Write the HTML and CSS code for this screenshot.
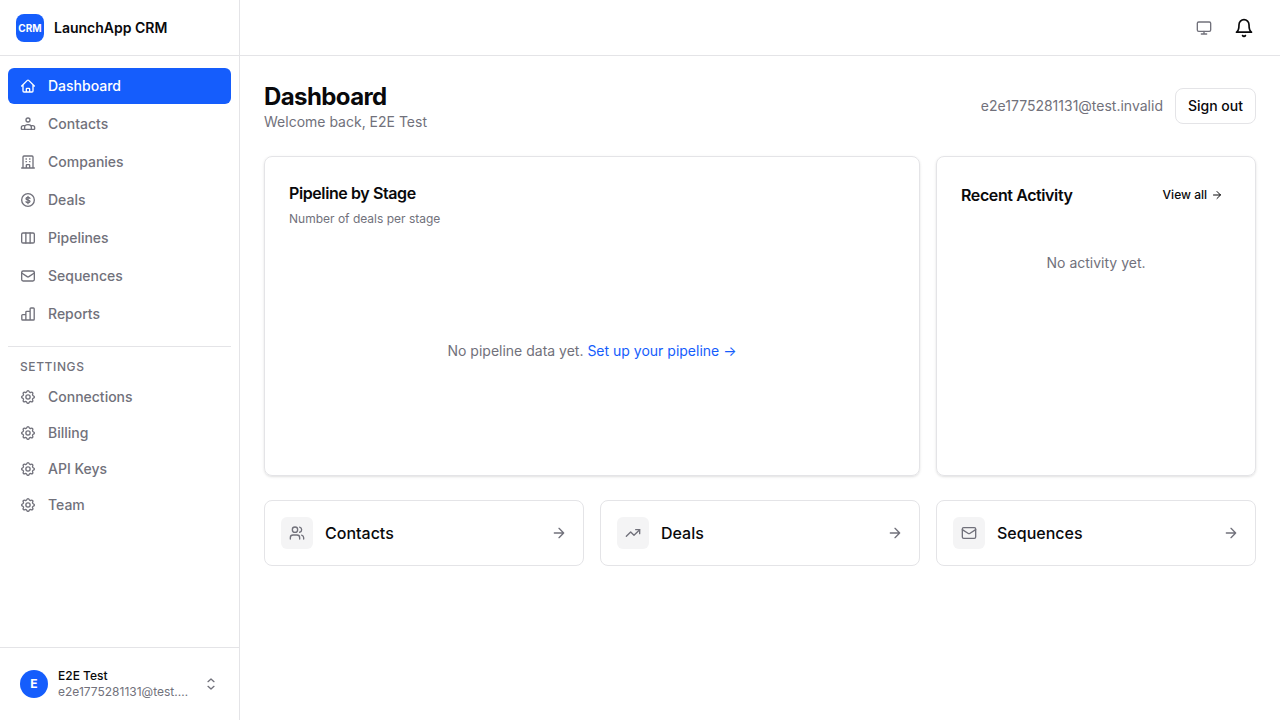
FILE: index.html
```html
<!DOCTYPE html>
<html lang="en">
<head>
    <meta charset="UTF-8">
    <meta name="viewport" content="width=device-width, initial-scale=1.0">
    <title>LaunchApp CRM</title>
    <link rel="stylesheet" href="styles.css">
</head>
<body>
    <svg class="sprite" aria-hidden="true">
        <symbol id="icon-gear" viewBox="0 0 24 24">
            <path d="M10.2 3.9c.5-2 3.1-2 3.6 0a1.9 1.9 0 0 0 2.7 1.1c1.7-1.1 3.6.8 2.5 2.5a1.9 1.9 0 0 0 1.1 2.7c2 .5 2 3.1 0 3.6a1.9 1.9 0 0 0-1.1 2.7c1.1 1.7-.8 3.6-2.5 2.5a1.9 1.9 0 0 0-2.7 1.1c-.5 2-3.1 2-3.6 0a1.9 1.9 0 0 0-2.7-1.1c-1.7 1.1-3.6-.8-2.5-2.5a1.9 1.9 0 0 0-1.1-2.7c-2-.5-2-3.1 0-3.6A1.9 1.9 0 0 0 5 7.5C3.9 5.8 5.8 3.9 7.5 5a1.9 1.9 0 0 0 2.7-1.1Z"/>
            <circle cx="12" cy="12" r="3.2"/>
        </symbol>
        <symbol id="icon-arrow" viewBox="0 0 24 24">
            <path d="M5 12h14M12 5l7 7-7 7"/>
        </symbol>
    </svg>

    <aside class="sidebar">
        <div class="brand">
            <span class="brand-logo">CRM</span>
            <span class="brand-name">LaunchApp CRM</span>
        </div>

        <nav class="nav">
            <div class="nav-group">
                <a class="nav-link active" href="#dashboard">
                    <svg class="icon" viewBox="0 0 24 24"><path d="m2.5 12 8.5-8.4a1.4 1.4 0 0 1 2 0L21.5 12M4.5 10v9.5A1.5 1.5 0 0 0 6 21h12a1.5 1.5 0 0 0 1.5-1.5V10M9.5 21v-4.5a1 1 0 0 1 1-1h3a1 1 0 0 1 1 1V21"/></svg>
                    Dashboard
                </a>
                <a class="nav-link" href="#contacts">
                    <svg class="icon" viewBox="0 0 24 24"><circle cx="12" cy="6" r="3"/><path d="M7 20v-3.5c0-2.2 2-3.5 5-3.5s5 1.3 5 3.5V20M6.5 14.5H5a3 3 0 0 0-3 3V19a1 1 0 0 0 1 1h18a1 1 0 0 0 1-1v-1.5a3 3 0 0 0-3-3h-1.5"/></svg>
                    Contacts
                </a>
                <a class="nav-link" href="#companies">
                    <svg class="icon" viewBox="0 0 24 24"><path d="M2.5 21h19M4.5 21V4.5A1.5 1.5 0 0 1 6 3h12a1.5 1.5 0 0 1 1.5 1.5V21M9 7.5h.6M14.4 7.5h.6M9 11.5h.6M14.4 11.5h.6M9.5 21v-4a1 1 0 0 1 1-1h3a1 1 0 0 1 1 1v4"/></svg>
                    Companies
                </a>
                <a class="nav-link" href="#deals">
                    <svg class="icon" viewBox="0 0 24 24"><circle cx="12" cy="12" r="9.5"/><path d="M12 6.5v11M15 9.5c-.6-.8-1.7-1.2-3-1.2-1.7 0-3 .7-3 1.9 0 2.6 6 1.1 6 3.7 0 1.2-1.3 1.9-3 1.9-1.3 0-2.4-.4-3-1.2"/></svg>
                    Deals
                </a>
                <a class="nav-link" href="#pipelines">
                    <svg class="icon" viewBox="0 0 24 24"><rect x="2.5" y="4.5" width="19" height="15" rx="2"/><path d="M8.8 4.5v15M15.2 4.5v15"/></svg>
                    Pipelines
                </a>
                <a class="nav-link" href="#sequences">
                    <svg class="icon" viewBox="0 0 24 24"><rect x="2.5" y="4.5" width="19" height="15" rx="2.2"/><path d="M2.5 7.5 10.7 13a2.3 2.3 0 0 0 2.6 0l8.2-5.5"/></svg>
                    Sequences
                </a>
                <a class="nav-link" href="#reports">
                    <svg class="icon" viewBox="0 0 24 24"><path d="M8.8 21H4a1.3 1.3 0 0 1-1.3-1.3v-5.4A1.3 1.3 0 0 1 4 13h4.8M15.2 21H8.8V9.3A1.3 1.3 0 0 1 10.1 8h5.1M15.2 21V4.3A1.3 1.3 0 0 1 16.5 3H20a1.3 1.3 0 0 1 1.3 1.3v15.4A1.3 1.3 0 0 1 20 21Z"/></svg>
                    Reports
                </a>
            </div>

            <div class="nav-settings">
                <h2 class="nav-title">SETTINGS</h2>
                <a class="nav-link" href="#connections"><svg class="icon"><use href="#icon-gear"/></svg>Connections</a>
                <a class="nav-link" href="#billing"><svg class="icon"><use href="#icon-gear"/></svg>Billing</a>
                <a class="nav-link" href="#api-keys"><svg class="icon"><use href="#icon-gear"/></svg>API Keys</a>
                <a class="nav-link" href="#team"><svg class="icon"><use href="#icon-gear"/></svg>Team</a>
            </div>
        </nav>

        <div class="sidebar-footer">
            <button class="user-menu" type="button">
                <span class="avatar">E</span>
                <span class="user-info">
                    <span class="user-name">E2E Test</span>
                    <span class="user-email">e2e1775281131@test.invalid</span>
                </span>
                <svg class="icon" viewBox="0 0 24 24"><path d="m7.5 15.5 4.5 4 4.5-4M7.5 8.500l4.500-4 4.500 4"/></svg>
            </button>
        </div>
    </aside>

    <div class="page">
        <header class="topbar">
            <button class="icon-button muted" type="button" aria-label="Theme">
                <svg class="icon" viewBox="0 0 24 24"><rect x="2" y="3" width="20" height="14" rx="2"/><path d="M8 21h8M12 17v4"/></svg>
            </button>
            <button class="icon-button" type="button" aria-label="Notifications">
                <svg class="icon icon-lg" viewBox="0 0 24 24"><path d="M6 8a6 6 0 0 1 12 0c0 7 3 9 3 9H3s3-2 3-9"/><path d="M10.3 21a1.94 1.94 0 0 0 3.4 0"/></svg>
            </button>
        </header>

        <main class="content">
            <div class="page-header">
                <div>
                    <h1>Dashboard</h1>
                    <p class="welcome">Welcome back, E2E Test</p>
                </div>
                <div class="account">
                    <span>e2e1775281131@test.invalid</span>
                    <button class="sign-out" type="button">Sign out</button>
                </div>
            </div>

            <div class="grid">
                <section class="card card-wide">
                    <h2 class="card-title">Pipeline by Stage</h2>
                    <p class="card-description">Number of deals per stage</p>
                    <div class="empty-chart">
                        <p>No pipeline data yet. <a href="#pipelines">Set up your pipeline →</a></p>
                    </div>
                </section>

                <section class="card">
                    <div class="card-header">
                        <h2 class="card-title">Recent Activity</h2>
                        <a class="view-all" href="#activity">View all <svg class="icon icon-sm"><use href="#icon-arrow"/></svg></a>
                    </div>
                    <p class="empty-activity">No activity yet.</p>
                </section>
            </div>

            <div class="grid">
                <a class="shortcut" href="#contacts">
                    <span class="shortcut-icon">
                        <svg class="icon" viewBox="0 0 24 24"><path d="M16 21v-2a4 4 0 0 0-4-4H6a4 4 0 0 0-4 4v2"/><circle cx="9" cy="7" r="4"/><path d="M22 21v-2a4 4 0 0 0-3-3.87M16 3.13a4 4 0 0 1 0 7.75"/></svg>
                    </span>
                    <span class="shortcut-label">Contacts</span>
                    <svg class="icon"><use href="#icon-arrow"/></svg>
                </a>
                <a class="shortcut" href="#deals">
                    <span class="shortcut-icon">
                        <svg class="icon" viewBox="0 0 24 24"><path d="m22 7-8.5 8.5-5-5L2 17"/><path d="M16 7h6v6"/></svg>
                    </span>
                    <span class="shortcut-label">Deals</span>
                    <svg class="icon"><use href="#icon-arrow"/></svg>
                </a>
                <a class="shortcut" href="#sequences">
                    <span class="shortcut-icon">
                        <svg class="icon" viewBox="0 0 24 24"><rect x="2" y="4" width="20" height="16" rx="2"/><path d="m22 7-8.97 5.7a1.94 1.94 0 0 1-2.06 0L2 7"/></svg>
                    </span>
                    <span class="shortcut-label">Sequences</span>
                    <svg class="icon"><use href="#icon-arrow"/></svg>
                </a>
            </div>
        </main>
    </div>
</body>
</html>
```
FILE: styles.css
```css
:root {
    --primary: #155dfc;
    --text: #09090b;
    --muted: #71717b;
    --border: #e4e4e7;
}

* {
    box-sizing: border-box;
}

body {
    display: flex;
    min-height: 100vh;
    margin: 0;
    font-family: Inter, sans-serif;
    font-size: 14px;
    line-height: 20px;
    color: var(--text);
    background-color: white;
}

h1, h2, p {
    margin: 0;
}

a {
    color: inherit;
    text-decoration: none;
}

button {
    font: inherit;
    color: inherit;
    background: none;
    border: none;
    cursor: pointer;
}

.sprite {
    display: none;
}

.icon {
    flex-shrink: 0;
    width: 16px;
    height: 16px;
    fill: none;
    stroke: currentColor;
    stroke-width: 2;
    stroke-linecap: round;
    stroke-linejoin: round;
}

.icon-sm {
    width: 12px;
    height: 12px;
}

.icon-lg {
    width: 20px;
    height: 20px;
}

/* Sidebar */
.sidebar {
    display: flex;
    flex-direction: column;
    flex-shrink: 0;
    width: 240px;
    border-right: 1px solid var(--border);
}

.brand {
    display: flex;
    align-items: center;
    gap: 10px;
    height: 56px;
    padding: 0 16px;
    border-bottom: 1px solid var(--border);
}

.brand-logo {
    display: flex;
    align-items: center;
    justify-content: center;
    width: 28px;
    height: 28px;
    border-radius: 8px;
    background-color: var(--primary);
    color: white;
    font-size: 10px;
    font-weight: 700;
}

.brand-name {
    font-weight: 600;
}

.nav {
    flex: 1;
    padding: 12px 8px;
}

.nav-group {
    display: flex;
    flex-direction: column;
    gap: 2px;
}

.nav-link {
    display: flex;
    align-items: center;
    gap: 12px;
    padding: 8px 12px;
    border-radius: 6px;
    color: var(--muted);
    font-weight: 500;
}

.nav-link.active {
    background-color: var(--primary);
    color: white;
}

.nav-settings {
    margin-top: 14px;
    padding-top: 12px;
    border-top: 1px solid var(--border);
}

.nav-title {
    padding: 0 12px 4px;
    color: var(--muted);
    font-size: 12px;
    font-weight: 500;
    line-height: 16px;
    letter-spacing: 0.05em;
}

.sidebar-footer {
    padding: 12px;
    border-top: 1px solid var(--border);
}

.user-menu {
    display: flex;
    align-items: center;
    gap: 10px;
    width: 100%;
    padding: 8px;
    font-size: 12px;
    line-height: 16px;
    text-align: left;
}

.user-menu .icon {
    color: var(--muted);
}

.avatar {
    display: flex;
    align-items: center;
    justify-content: center;
    flex-shrink: 0;
    width: 28px;
    height: 28px;
    border-radius: 50%;
    background-color: var(--primary);
    color: white;
    font-weight: 700;
}

.user-info {
    flex: 1;
    min-width: 0;
    padding-right: 4px;
}

.user-name, .user-email {
    display: block;
    overflow: hidden;
    text-overflow: ellipsis;
    white-space: nowrap;
}

.user-name {
    font-weight: 500;
}

.user-email {
    color: var(--muted);
}

/* Page */
.page {
    flex: 1;
    min-width: 0;
}

.topbar {
    display: flex;
    align-items: center;
    justify-content: flex-end;
    height: 56px;
    padding: 0 16px;
    border-bottom: 1px solid var(--border);
}

.icon-button {
    display: flex;
    align-items: center;
    justify-content: center;
    width: 40px;
    height: 40px;
    padding: 0;
}

.muted {
    color: var(--muted);
}

.content {
    display: flex;
    flex-direction: column;
    gap: 24px;
    padding: 24px;
}

.page-header {
    display: flex;
    align-items: center;
    justify-content: space-between;
}

h1 {
    padding-top: 2px;
    font-size: 24px;
    font-weight: 700;
    line-height: 30px;
    letter-spacing: -0.025em;
}

.welcome {
    color: var(--muted);
}

.account {
    display: flex;
    align-items: center;
    gap: 12px;
    color: var(--muted);
}

.sign-out {
    height: 36px;
    padding: 0 12px;
    border: 1px solid var(--border);
    border-radius: 8px;
    color: var(--text);
    font-weight: 500;
}

.grid {
    display: grid;
    grid-template-columns: repeat(3, 1fr);
    gap: 16px;
}

.card {
    padding: 24px;
    border: 1px solid var(--border);
    border-radius: 8px;
    box-shadow: 0 1px 3px rgba(0, 0, 0, 0.1), 0 1px 2px -1px rgba(0, 0, 0, 0.1);
}

.card-wide {
    grid-column: span 2;
}

.card-header {
    display: flex;
    align-items: center;
    justify-content: space-between;
}

.card-title {
    font-size: 16px;
    font-weight: 600;
    line-height: 24px;
    letter-spacing: -0.025em;
}

.card-description {
    margin-top: 6px;
    color: var(--muted);
    font-size: 12px;
    line-height: 16px;
}

.empty-chart {
    display: flex;
    align-items: center;
    justify-content: center;
    height: 200px;
    margin-top: 24px;
    color: var(--muted);
}

.empty-chart a {
    color: var(--primary);
}

.view-all {
    display: flex;
    align-items: center;
    gap: 4px;
    height: 28px;
    padding: 0 8px;
    font-size: 12px;
    font-weight: 500;
}

.empty-activity {
    padding: 44px 0;
    color: var(--muted);
    text-align: center;
}

.shortcut {
    display: flex;
    align-items: center;
    gap: 12px;
    padding: 16px;
    border: 1px solid var(--border);
    border-radius: 8px;
    color: var(--muted);
}

.shortcut-icon {
    display: flex;
    align-items: center;
    justify-content: center;
    width: 32px;
    height: 32px;
    border-radius: 6px;
    background-color: #f4f4f5;
}

.shortcut-label {
    flex: 1;
    color: var(--text);
    font-size: 16px;
    font-weight: 500;
    line-height: 24px;
}
```
